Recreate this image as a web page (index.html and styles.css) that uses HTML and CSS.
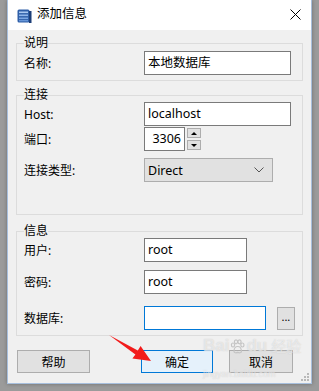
FILE: index.html
```html
<!DOCTYPE html>
<html lang="zh-CN">
<head>
    <meta charset="UTF-8">
    <meta name="viewport" content="width=device-width, initial-scale=1.0">
    <title>添加信息</title>
    <link rel="stylesheet" href="styles.css">
</head>
<body>
    <div class="window">
        <div class="titlebar">
            <svg class="app-icon" width="15" height="15" viewBox="0 0 15 15">
                <rect x="0.5" y="0.5" width="12" height="13" rx="1.5" fill="#2f5fa8"/>
                <rect x="12" y="2" width="2.5" height="12" fill="#1d3f78"/>
                <rect x="2" y="2.5" width="9" height="1.6" fill="#a9c8f0"/>
                <rect x="2" y="5.5" width="9" height="1.6" fill="#8fb6ea"/>
                <rect x="2" y="8.5" width="9" height="1.6" fill="#7aa6e2"/>
                <rect x="2" y="11" width="9" height="1.4" fill="#6796d8"/>
            </svg>
            <span class="title">添加信息</span>
            <svg class="close" width="11" height="11" viewBox="0 0 11 11">
                <path d="M0.5 0.5 L10.5 10.5 M10.5 0.5 L0.5 10.5" stroke="#000" stroke-width="1"/>
            </svg>
        </div>

        <div class="content">
            <fieldset class="group group-desc">
                <legend>说明</legend>
                <div class="row">
                    <label>名称:</label>
                    <div class="field wide">本地数据库</div>
                </div>
            </fieldset>

            <fieldset class="group group-conn">
                <legend>连接</legend>
                <div class="row">
                    <label>Host:</label>
                    <div class="field wide">localhost</div>
                </div>
                <div class="row row-port">
                    <label>端口:</label>
                    <div class="field port">3306</div>
                    <div class="spin">
                        <span class="spin-btn"><i class="tri up"></i></span>
                        <span class="spin-btn"><i class="tri down"></i></span>
                    </div>
                </div>
                <div class="row row-type">
                    <label>连接类型:</label>
                    <div class="select">
                        <span>Direct</span>
                        <svg width="10" height="6" viewBox="0 0 10 6">
                            <path d="M0.5 0.5 L5 5 L9.5 0.5" fill="none" stroke="#555" stroke-width="1"/>
                        </svg>
                    </div>
                </div>
            </fieldset>

            <fieldset class="group group-info">
                <legend>信息</legend>
                <div class="row">
                    <label>用户:</label>
                    <div class="field short">root</div>
                </div>
                <div class="row row-pass">
                    <label>密码:</label>
                    <div class="field short">root</div>
                </div>
                <div class="row row-db">
                    <label>数据库:</label>
                    <div class="field db focused"></div>
                    <button class="browse">...</button>
                </div>
            </fieldset>

            <div class="buttons">
                <button class="btn btn-help">帮助</button>
                <button class="btn btn-ok">确定</button>
                <button class="btn btn-cancel">取消</button>
            </div>
        </div>

        <svg class="grip" width="8" height="8" viewBox="0 0 8 8">
            <rect x="6" y="0" width="2" height="2" fill="#b8b8b8"/>
            <rect x="3" y="3" width="2" height="2" fill="#b8b8b8"/>
            <rect x="6" y="3" width="2" height="2" fill="#b8b8b8"/>
            <rect x="0" y="6" width="2" height="2" fill="#b8b8b8"/>
            <rect x="3" y="6" width="2" height="2" fill="#b8b8b8"/>
            <rect x="6" y="6" width="2" height="2" fill="#b8b8b8"/>
        </svg>
    </div>

    <svg class="arrow" width="319" height="391" viewBox="0 0 319 391">
        <polygon points="109,335 137.8,350.6 140.6,346 151,361 132.4,358.6 135.4,354.4" fill="#f21b1b"/>
    </svg>

    <div class="watermark">
        <div class="wm-top">
            <span>Bai</span>
            <svg class="paw" width="15" height="15" viewBox="0 0 15 15">
                <g fill="none" stroke="#c4c4c4" stroke-width="1.2">
                    <ellipse cx="3" cy="6" rx="1.6" ry="2"/>
                    <ellipse cx="6" cy="2.8" rx="1.6" ry="2"/>
                    <ellipse cx="9.5" cy="2.8" rx="1.6" ry="2"/>
                    <ellipse cx="12.4" cy="6" rx="1.6" ry="2"/>
                    <path d="M4 12.5 C4 9 6 7.5 7.7 7.5 C9.4 7.5 11.4 9 11.4 12.5 C11.4 14 9 14 7.7 13.4 C6.4 14 4 14 4 12.5 Z"/>
                </g>
            </svg>
            <span>du</span>
            <span class="wm-cn">经验</span>
        </div>
        <div class="wm-url">jingyan.baidu.com</div>
    </div>
</body>
</html>
```

FILE: styles.css
```css
:root {
    --face: #f0f0f0;
    --btn-face: #e1e1e1;
    --btn-border: #adadad;
    --field-border: #7a7a7a;
    --group-border: #dcdcdc;
    --accent: #0078d7;
}

* {
    box-sizing: border-box;
}

body {
    margin: 0;
    padding: 0 0 0 7px;
    background: #9b9b9b;
    font-family: "Noto Sans", "Noto Sans CJK SC", sans-serif;
    font-size: 12px;
    color: #000;
    height: 391px;
    overflow: hidden;
}

.window {
    position: relative;
    width: 305px;
    height: 384px;
    background: var(--face);
    border: 1px solid #a7bfdd;
    border-top: none;
    box-shadow: 0 0 4px rgba(0, 0, 0, 0.3);
}

.titlebar {
    height: 30px;
    background: #fff;
    display: flex;
    align-items: center;
    padding: 0 0 0 9px;
}

.app-icon {
    margin-top: 3px;
}

.title {
    margin-left: 5px;
    font-size: 12.5px;
    line-height: 14px;
    margin-top: -2px;
}

.close {
    margin-left: auto;
    margin-right: 10px;
    margin-top: -1px;
}

.content {
    padding: 6px 8px 10px 8px;
}

.group {
    margin: 0;
    min-width: 0;
    border: 1px solid var(--group-border);
    padding: 0 7px 5px 7px;
}

.group legend {
    padding: 0;
    line-height: 14px;
    font-size: 12px;
}

.group-conn {
    margin-top: 7px;
    padding-bottom: 32px;
}

.group-info {
    margin-top: 9px;
}

.group-desc .row {
    margin-top: 1px;
}

.row {
    display: flex;
    align-items: center;
}

.row label {
    width: 120px;
    flex: none;
}

.row-port {
    margin-top: 1px;
}

.row-type {
    margin-top: 7px;
}

.row-pass {
    margin-top: 8px;
}

.row-db {
    margin-top: 12px;
}

.field {
    height: 24px;
    border: 1px solid var(--field-border);
    background: #fff;
    padding: 0 3px;
    line-height: 22px;
    font-size: 12.5px;
    white-space: nowrap;
}

.field.wide {
    width: 147px;
}

.field.port {
    width: 41px;
    text-align: right;
    padding-right: 3px;
}

.field.short {
    width: 103px;
}

.field.db {
    width: 127px;
}

.field.focused {
    border-color: var(--accent);
}

.spin {
    display: flex;
    flex-direction: column;
    gap: 2px;
    margin-left: 2px;
}

.spin-btn {
    width: 14px;
    height: 10px;
    background: var(--btn-face);
    border: 1px solid var(--btn-border);
    display: flex;
    align-items: center;
    justify-content: center;
}

.tri {
    width: 0;
    height: 0;
    border-left: 3px solid transparent;
    border-right: 3px solid transparent;
}

.tri.up {
    border-bottom: 3px solid #000;
}

.tri.down {
    border-top: 3px solid #000;
}

.select {
    width: 129px;
    height: 24px;
    background: var(--btn-face);
    border: 1px solid var(--btn-border);
    display: flex;
    align-items: center;
    justify-content: space-between;
    padding: 0 8px 0 3px;
    font-size: 12.5px;
}

.browse {
    margin-left: 11px;
    width: 19px;
    height: 23px;
    padding: 0 0 4px 0;
    background: var(--btn-face);
    border: 1px solid var(--btn-border);
    font-family: inherit;
    font-size: 11px;
    line-height: 1;
    color: #000;
}

.buttons {
    display: flex;
    margin-top: 14px;
    padding-left: 1px;
}

.btn {
    height: 23px;
    padding: 0;
    background: var(--btn-face);
    border: 1px solid var(--btn-border);
    font-family: inherit;
    font-size: 12px;
    color: #000;
}

.btn-help {
    width: 73px;
}

.btn-ok {
    width: 72px;
    margin-left: 51px;
    background: #e5f1fb;
    border-color: var(--accent);
}

.btn-cancel {
    width: 64px;
    margin-left: 16px;
}

.grip {
    position: absolute;
    right: 2px;
    bottom: 2px;
}

.arrow {
    position: absolute;
    left: 0;
    top: 0;
}

.watermark {
    position: absolute;
    left: 203px;
    top: 336px;
    color: rgba(255, 255, 255, 0.55);
    text-shadow: 0 0 1px rgba(170, 170, 170, 0.6);
    pointer-events: none;
}

.wm-top {
    display: flex;
    align-items: center;
    gap: 1px;
    font-family: "Liberation Sans", sans-serif;
    font-size: 17px;
    font-weight: bold;
    line-height: 20px;
    white-space: nowrap;
}

.wm-cn {
    font-family: "Noto Sans CJK SC", sans-serif;
    font-size: 15px;
    font-weight: normal;
    margin-left: 3px;
}

.wm-url {
    font-family: "Liberation Sans", sans-serif;
    font-size: 9px;
    line-height: 10px;
    margin-top: 13px;
}
```
